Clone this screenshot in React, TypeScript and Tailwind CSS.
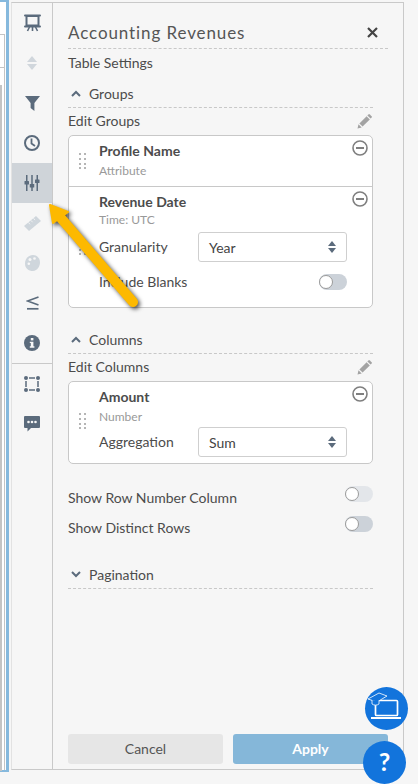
import type { ReactNode } from "react";

const iconColor = "#5b6b7c";

function Dashed() {
  return <div className="border-b border-dashed border-[#c8c8c8]" />;
}

function Grip({ className }: { className: string }) {
  return (
    <svg width="7" height="16" viewBox="0 0 7 16" className={className} fill="#b5b5b5">
      {[0, 5, 10, 14].map((y) => (
        <g key={y}>
          <rect x="0" y={y} width="2" height="2" />
          <rect x="5" y={y} width="2" height="2" />
        </g>
      ))}
    </svg>
  );
}

function MinusCircle({ className }: { className: string }) {
  return (
    <svg width="16" height="16" viewBox="0 0 16 16" className={className} fill="none" stroke="#7f7f7f" strokeWidth="1.6">
      <circle cx="8" cy="8" r="7" />
      <path d="M4 8h8" strokeWidth="2" />
    </svg>
  );
}

function Pencil() {
  return (
    <svg width="15" height="15" viewBox="0 0 15 15" fill="#a3a3a3">
      <path d="M0.5 14.5l1-4.2 3.2 3.2z" />
      <path d="M2.4 9.4l7.2-7.2 3.2 3.2-7.2 7.2z" />
      <path d="M10.4 1.4l1-1a1 1 0 0 1 1.4 0l1.8 1.8a1 1 0 0 1 0 1.400l-1 1z" />
    </svg>
  );
}

function Chevron({ down }: { down?: boolean }) {
  return (
    <svg width="10" height="7" viewBox="0 0 10 7" fill="none" stroke={iconColor} strokeWidth="2" className={down ? "rotate-180" : ""}>
      <path d="M1 6l4-4 4 4" />
    </svg>
  );
}

function Toggle({ light }: { light?: boolean }) {
  return (
    <div className={`flex h-4 w-7 items-center rounded-full ${light ? "bg-[#e3e6ea]" : "bg-[#ccd2d9]"}`}>
      <div className="h-[14px] w-[14px] rounded-full border border-[#9a9a9a] bg-white" />
    </div>
  );
}

function SelectBox({ value }: { value: string }) {
  return (
    <div className="flex h-[30px] w-[149px] items-center justify-between rounded-[3px] border border-[#cfcfcf] bg-white pl-[10px] pr-[10px] text-[14px] text-[#444]">
      <span>{value}</span>
      <svg width="8" height="12" viewBox="0 0 8 12" fill={iconColor}>
        <path d="M4 0l4 5H0z" />
        <path d="M4 12L0 7h8z" />
      </svg>
    </div>
  );
}

function SectionHead({ title, down }: { title: string; down?: boolean }) {
  return (
    <div>
      <div className="flex h-[25px] items-center gap-[8px] pb-[3px] pl-[3px] text-[14px] text-[#4c4c4c]">
        <Chevron down={down} />
        <span>{title}</span>
      </div>
      <Dashed />
    </div>
  );
}

function EditRow({ label }: { label: string }) {
  return (
    <div className="flex h-[27px] items-center justify-between pr-[1px] text-[14px] text-[#4c4c4c]">
      <span className="mb-[2px]">{label}</span>
      <Pencil />
    </div>
  );
}

function FieldRow({ label, children }: { label: string; children: ReactNode }) {
  return (
    <div className="flex items-center">
      <span className="mb-[2px] w-[99px] text-[14px] text-[#4c4c4c]">{label}</span>
      {children}
    </div>
  );
}

function SideIcon({ children, active }: { children: ReactNode; active?: boolean }) {
  return (
    <div className={`flex h-10 items-center justify-center ${active ? "bg-[#cfd4d9]" : ""}`}>{children}</div>
  );
}

function Sidebar() {
  return (
    <div className="flex w-[41px] shrink-0 flex-col border-r border-[#c9c9c9]">
      <SideIcon>
        <svg width="17" height="18" viewBox="0 0 17 18" fill="none" stroke={iconColor}>
          <path d="M1 1.500h15" strokeWidth="2" strokeLinecap="round" />
          <rect x="2.500" y="2" width="12" height="9.500" strokeWidth="2" />
          <path d="M1 12.500h15" strokeWidth="2" strokeLinecap="round" />
          <path d="M5.500 13l-2 4M8.500 13v4M11.500 13l2 4" strokeWidth="1.600" />
        </svg>
      </SideIcon>
      <SideIcon>
        <svg width="10" height="14" viewBox="0 0 10 14" fill="#d0d6dc">
          <path d="M5 0l5 6H0z" />
          <path d="M5 14L0 8h10z" />
        </svg>
      </SideIcon>
      <SideIcon>
        <svg width="15" height="15" viewBox="0 0 15 15" fill={iconColor}>
          <path d="M0 0h15L9.400 7v8L5.600 12V7z" />
        </svg>
      </SideIcon>
      <SideIcon>
        <svg width="16" height="16" viewBox="0 0 16 16" fill="none" stroke={iconColor} strokeWidth="2">
          <circle cx="8" cy="8" r="7" />
          <path d="M7.500 3.500V8.500L11 11" strokeWidth="1.800" />
        </svg>
      </SideIcon>
      <SideIcon active>
        <svg width="16" height="16" viewBox="0 0 16 16" fill={iconColor}>
          <rect x="2" y="0" width="1.500" height="16" />
          <rect x="7.250" y="0" width="1.500" height="16" />
          <rect x="12.500" y="0" width="1.500" height="16" />
          <rect x="0.500" y="6" width="4.500" height="3.500" rx="0.500" />
          <rect x="5.750" y="9" width="4.500" height="3.500" rx="0.500" />
          <rect x="11" y="4.500" width="4.500" height="3.500" rx="0.500" />
        </svg>
      </SideIcon>
      <SideIcon>
        <svg width="17" height="15" viewBox="0 0 17 15" fill="#cfd6dc">
          <path d="M0 10L12 0l5 5L5 15z" />
          <path d="M4.500 6.500l1.500 1.800M7 4.400l1.500 1.800M9.500 2.300l1.500 1.800" stroke="#f7f7f7" strokeWidth="0.800" />
        </svg>
      </SideIcon>
      <SideIcon>
        <svg width="15" height="16" viewBox="0 0 15 16" fill="#cfd6dc">
          <path d="M8 0c4 0 7 3.200 7 7.600 0 3.600-2.600 8.400-7 8.400-4.600 0-8-3-8-7.600S3.400 0 8 0z" />
          <circle cx="5" cy="4.500" r="1.500" fill="#f7f7f7" />
          <circle cx="9.500" cy="3.500" r="1.300" fill="#f7f7f7" />
          <circle cx="3.800" cy="8.800" r="1.300" fill="#f7f7f7" />
        </svg>
      </SideIcon>
      <SideIcon>
        <svg width="13" height="14" viewBox="0 0 13 14" fill="none" stroke={iconColor} strokeWidth="1.700">
          <path d="M12.500 1L1.500 5l11 4" />
          <path d="M1 12.800h11.500" />
        </svg>
      </SideIcon>
      <SideIcon>
        <svg width="16" height="16" viewBox="0 0 16 16">
          <circle cx="8" cy="8" r="8" fill={iconColor} />
          <rect x="6.800" y="3" width="2.600" height="2.400" fill="#f7f7f7" />
          <path d="M5.800 6.700h3.600v4.600h1v1.400H5.800v-1.400h1V8.100h-1z" fill="#f7f7f7" />
        </svg>
      </SideIcon>
      <div className="border-t border-[#c9c9c9]">
        <SideIcon>
          <svg width="16" height="16" viewBox="0 0 16 16" fill={iconColor}>
            <path d="M5 2h6M5 14h6M2 5v6M14 5v6" stroke={iconColor} strokeWidth="1.500" />
            <circle cx="2" cy="2" r="2" />
            <circle cx="14" cy="2" r="2" />
            <circle cx="2" cy="14" r="2" />
            <circle cx="14" cy="14" r="2" />
          </svg>
        </SideIcon>
        <SideIcon>
          <svg width="16" height="16" viewBox="0 0 16 16">
            <path d="M1 0h14a1 1 0 0 1 1 1v10a1 1 0 0 1-1 1H7l-3.500 3.500V12H1a1 1 0 0 1-1-1V1a1 1 0 0 1 1-1z" fill={iconColor} />
            <circle cx="4.500" cy="6" r="1.300" fill="#f7f7f7" />
            <circle cx="8" cy="6" r="1.300" fill="#f7f7f7" />
            <circle cx="11.500" cy="6" r="1.300" fill="#f7f7f7" />
          </svg>
        </SideIcon>
      </div>
    </div>
  );
}

function SettingsPanel() {
  return (
    <div className="flex min-w-0 flex-1 flex-col pl-[15px] pr-[30px]">
      <div className="mr-[-15px]">
        <div className="flex h-[45px] items-end justify-between pb-[3px] pr-[10px]">
          <span className="text-[17px] leading-[24px] tracking-[0.9px] text-[#555]">Accounting Revenues</span>
          <svg width="11" height="11" viewBox="0 0 11 11" stroke="#444" strokeWidth="2.200" className="mb-[7px]">
            <path d="M1 1l9 9M10 1l-9 9" />
          </svg>
        </div>
        <Dashed />
      </div>
      <div className="mt-[4px] text-[14px] leading-[20px] text-[#4c4c4c]">Table Settings</div>
      <div className="mt-[9px]">
        <SectionHead title="Groups" />
      </div>
      <EditRow label="Edit Groups" />
      <div className="rounded-[5px] border border-[#c8c8c8] bg-white">
        <div className="relative h-[51px] border-b border-[#c8c8c8] pl-[30px] pt-[4px]">
          <Grip className="absolute left-[10px] top-[17px]" />
          <MinusCircle className="absolute right-[4px] top-[4px]" />
          <div className="text-[14px] font-bold leading-[22px] text-[#4c4c4c]">Profile Name</div>
          <div className="mt-[1px] text-[12px] leading-[16px] text-[#999]">Attribute</div>
        </div>
        <div className="relative h-[120px] pl-[30px] pt-[4px]">
          <Grip className="absolute left-[10px] top-[52px]" />
          <MinusCircle className="absolute right-[4px] top-[4px]" />
          <div className="text-[14px] font-bold leading-[22px] text-[#4c4c4c]">Revenue Date</div>
          <div className="mt-[-1px] text-[12px] leading-[16px] text-[#999]">Time: UTC</div>
          <div className="mt-[4px]">
            <FieldRow label="Granularity">
              <SelectBox value="Year" />
            </FieldRow>
          </div>
          <div className="mt-[5px] flex h-[30px] items-center justify-between pr-[25px] text-[14px] text-[#4c4c4c]">
            <span className="mb-[2px]">Include Blanks</span>
            <Toggle />
          </div>
        </div>
      </div>
      <div className="mt-[20px]">
        <SectionHead title="Columns" />
      </div>
      <EditRow label="Edit Columns" />
      <div className="relative h-[83px] rounded-[5px] border border-[#c8c8c8] bg-white pl-[30px] pt-[4px]">
        <Grip className="absolute left-[10px] top-[31px]" />
        <MinusCircle className="absolute right-[4px] top-[4px]" />
        <div className="text-[14px] font-bold leading-[22px] text-[#4c4c4c]">Amount</div>
        <div className="mt-[1px] text-[12px] leading-[16px] text-[#999]">Number</div>
        <div className="mt-[2px]">
          <FieldRow label="Aggregation">
            <SelectBox value="Sum" />
          </FieldRow>
        </div>
      </div>
      <div className="mt-[22px] flex h-[30px] items-start justify-between text-[14px] leading-[20px] text-[#4c4c4c]">
        <span className="pt-[2px]">Show Row Number Column</span>
        <Toggle light />
      </div>
      <div className="flex h-[30px] items-start justify-between text-[14px] leading-[20px] text-[#4c4c4c]">
        <span className="pt-[2px]">Show Distinct Rows</span>
        <Toggle />
      </div>
      <div className="mt-[17px]">
        <SectionHead title="Pagination" down />
      </div>
      <div className="mb-[5px] mr-[-15px] mt-auto flex gap-[10px]">
        <button className="h-[30px] w-[155px] rounded-[3px] bg-[#e6e6e6] pb-[2px] text-[14px] text-[#555]">Cancel</button>
        <button className="h-[30px] w-[155px] rounded-[3px] bg-[#85b7d9] pb-[2px] text-[14px] font-bold text-white">Apply</button>
      </div>
    </div>
  );
}

export default function App() {
  return (
    <div className="relative flex h-[784px] w-[418px] items-start overflow-hidden bg-[#f6f6f6] font-['Lato',sans-serif]">
      {/* sliver of the page behind the panel */}
      <div className="mr-[2px] h-[772px] w-[9px] shrink-0 border-b-2 border-r-[3px] border-t-2 border-[#86b9dd] bg-white">
        <div className="mt-[32px] h-[736px] w-[5px] border-r border-t border-[#c4c4c4]">
          <div className="mt-[32px] h-[18px] border-t border-[#c4c4c4]" />
          <div className="h-[686px] w-[2px] bg-[#c4c4c4]" />
        </div>
      </div>

      <div className="mt-[2px] flex h-[768px] w-[393px] shrink-0 border border-[#c9c9c9] border-l-[#e2e2e2]">
        <Sidebar />
        <SettingsPanel />
      </div>

      {/* annotation arrow */}
      <svg width="100" height="115" viewBox="0 0 100 115" className="absolute left-[46px] top-[200px] drop-shadow-[2px_2px_2px_rgba(0,0,0,0.7)]">
        <path d="M14 17L87 102" stroke="#fdb900" strokeWidth="10" strokeLinecap="round" />
        <path d="M4 5L22 12L7 23z" fill="#fdb900" stroke="#fdb900" strokeWidth="2" strokeLinejoin="round" />
      </svg>

      {/* help bubbles */}
      <div className="absolute left-[365px] top-[687px] h-[43px] w-[43px] rounded-full bg-[#1274dc]">
        <svg width="43" height="43" viewBox="0 0 43 43" fill="none" stroke="#fff">
          <rect x="10.500" y="13.500" width="22" height="15" rx="1" strokeWidth="1.700" />
          <path d="M6 31h30" strokeWidth="2" />
          <path d="M3 12L14 6l8 3-10 6z" strokeWidth="0.800" fill="#1274dc" />
          <path d="M7 13v4c2 1.500 5 1.500 7 0v-3" strokeWidth="0.800" fill="#1274dc" />
        </svg>
      </div>
      <div className="absolute left-[363px] top-[741px] flex h-[43px] w-[43px] items-center justify-center rounded-full bg-[#1274dc] pb-[2px] text-[25px] font-bold text-white">
        ?
      </div>
    </div>
  );
}
